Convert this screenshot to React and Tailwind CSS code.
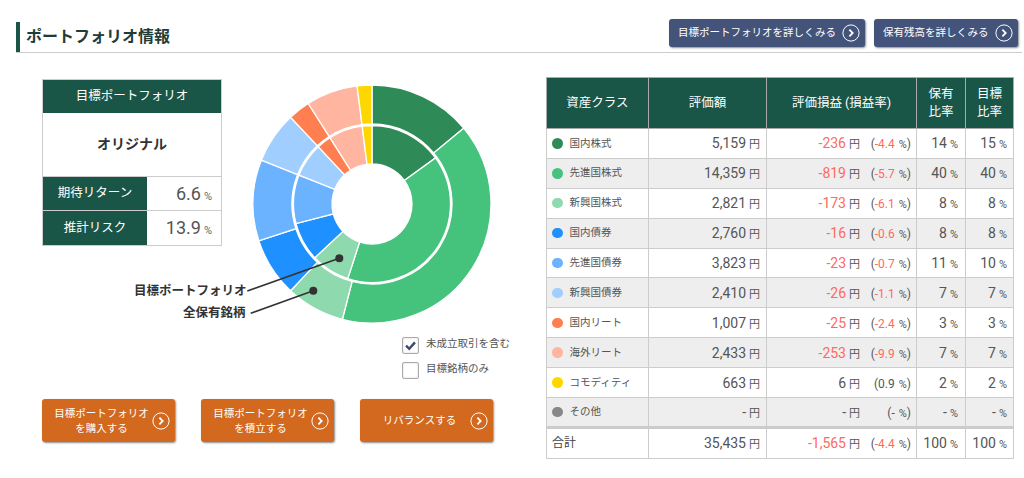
const FONT = 'font-["Roboto","Noto_Sans_CJK_JP",sans-serif]';

const COLORS = ["#2e8b57", "#45c27c", "#8fd9ae", "#1e90ff", "#6bb3ff", "#a0cfff", "#ff7f50", "#ffb59f", "#ffd700"];
const OUTER = [14, 40, 8, 8, 11, 7, 3, 7, 2];
const INNER = [15, 40, 8, 8, 10, 7, 3, 7, 2];

function arc(r0, r1, a0, a1) {
  const p = (r, a) => {
    const t = (a * Math.PI) / 180;
    return `${(120 + r * Math.sin(t)).toFixed(2)} ${(120 - r * Math.cos(t)).toFixed(2)}`;
  };
  const large = a1 - a0 > 180 ? 1 : 0;
  return `M${p(r1, a0)}A${r1} ${r1} 0 ${large} 1 ${p(r1, a1)}L${p(r0, a1)}A${r0} ${r0} 0 ${large} 0 ${p(r0, a0)}Z`;
}

function Ring({ data, r0, r1 }) {
  let acc = 0;
  return data.map((v, i) => {
    const a0 = acc * 3.6;
    acc += v;
    return <path key={i} d={arc(r0, r1, a0, acc * 3.6)} fill={COLORS[i]} stroke="#fff" strokeWidth="1.3" />;
  });
}

function Chevron({ className }) {
  return (
    <svg viewBox="0 0 20 20" className={className} fill="none" stroke="#fff">
      <circle cx="10" cy="10" r="9" strokeWidth="1.1" />
      <path d="M8.2 6.2 11.9 10 8.2 13.8" strokeWidth="2" />
    </svg>
  );
}

function TopButton({ children, className }) {
  return (
    <button className={`flex h-7 items-center justify-between rounded-[3px] bg-[#43537a] pl-[9px] pr-[5px] text-[10.5px] text-white shadow-[1px_1px_2px_rgba(0,0,0,0.45)] ${className}`}>
      <span className="whitespace-nowrap">{children}</span>
      <Chevron className="h-[18px] w-[18px] shrink-0" />
    </button>
  );
}

function OrangeButton({ lines }) {
  return (
    <button className="flex h-[43px] w-[133px] items-center justify-between rounded-[3px] bg-[#d2691e] pl-[9px] pr-[5px] text-[10.5px] leading-[15px] text-white shadow-[1px_1px_2px_rgba(0,0,0,0.45)]">
      <span className="flex-1 text-center">
        {lines.map((l) => (
          <span key={l} className="block whitespace-nowrap">{l}</span>
        ))}
      </span>
      <Chevron className="h-[18px] w-[18px] shrink-0" />
    </button>
  );
}

const ROWS = [
  ["#2e8b57", "国内株式", "5,159", "-236", "-4.4", "14", "15"],
  ["#45c27c", "先進国株式", "14,359", "-819", "-5.7", "40", "40"],
  ["#8fd9ae", "新興国株式", "2,821", "-173", "-6.1", "8", "8"],
  ["#1e90ff", "国内債券", "2,760", "-16", "-0.6", "8", "8"],
  ["#6bb3ff", "先進国債券", "3,823", "-23", "-0.7", "11", "10"],
  ["#a0cfff", "新興国債券", "2,410", "-26", "-1.1", "7", "7"],
  ["#ff7f50", "国内リート", "1,007", "-25", "-2.4", "3", "3"],
  ["#ffb59f", "海外リート", "2,433", "-253", "-9.9", "7", "7"],
  ["#ffd700", "コモディティ", "663", "6", "0.9", "2", "2"],
  ["#888888", "その他", "-", "-", "-", "-", "-"],
];

function Num({ v, unit, red }) {
  return (
    <>
      <span className={`text-[14px] ${red ? "text-[#ff6a5e]" : "text-[#555]"}`}>{v}</span>
      <span className="ml-[3px] text-[11px] text-[#555]">{unit}</span>
    </>
  );
}

function PL({ a, r }) {
  const red = a.startsWith("-") && a.length > 1;
  return (
    <td className="border border-[#ccc] pr-[5px]">
      <div className="flex items-baseline justify-end">
        <span><Num v={a} unit="円" red={red} /></span>
        <span className="w-[51px] text-right text-[12px] text-[#555]">
          (<span className={red ? "text-[#ff6a5e]" : ""}>{r}</span> <span className="ml-[1px] text-[11px]">%</span>)
        </span>
      </div>
    </td>
  );
}

function Ratio({ label, v }) {
  return (
    <div className="flex h-[34px] [&:not(:last-child)]:border-b [&:not(:last-child)]:border-[#ccc]">
      <div className="flex w-[104px] items-center justify-center bg-[#1a5648] text-[12.5px] text-white">{label}</div>
      <div className="flex-1 pr-[9px] pt-[3px] text-right">
        <span className="text-[18px] text-[#555]">{v}</span>
        <span className="ml-[3px] text-[11px] text-[#666]">%</span>
      </div>
    </div>
  );
}

export default function App() {
  return (
    <div className={`${FONT} h-[478px] w-[1024px] overflow-hidden bg-white text-[#444]`}>
      <header className="flex h-[52px] items-start justify-between pl-4 pr-[6px] pt-[19px]">
        <h1 className="mt-[3px] border-l-4 border-[#1a5648] pl-[6px] text-[16px] font-bold leading-[30px] text-[#1f3d36]">
          ポートフォリオ情報
        </h1>
        <div className="flex gap-[9px]">
          <TopButton className="w-[196px]">目標ポートフォリオを詳しくみる</TopButton>
          <TopButton className="w-[144px]">保有残高を詳しくみる</TopButton>
        </div>
      </header>
      <div className="ml-4 mr-[2px] h-px bg-[#ccc]" />

      <main className="flex pt-6">
        <section className="w-[546px] shrink-0">
          <div className="flex items-start pl-[42px]">
            <div className="mt-[2px] w-[180px] border border-[#ccc]">
              <div className="flex h-[33px] items-center justify-center bg-[#1a5648] text-[12.5px] text-white">目標ポートフォリオ</div>
              <div className="flex h-[64px] items-center justify-center border-b border-[#ccc] text-[14px] font-bold text-[#333]">オリジナル</div>
              <Ratio label="期待リターン" v="6.6" />
              <Ratio label="推計リスク" v="13.9" />
            </div>

            <div className="relative ml-[30px] mt-[7px] h-[240px] w-[240px]">
              <svg viewBox="0 0 240 240" className="h-[240px] w-[240px]">
                <Ring data={OUTER} r0={80} r1={119} />
                <Ring data={INNER} r0={40} r1={78.5} />
              </svg>
              <svg viewBox="0 0 240 240" className="absolute left-0 top-0 h-[240px] w-[240px] overflow-visible" fill="#333" stroke="#333">
                <path d="M-4.7 207 87.3 174.3" strokeWidth="1.6" />
                <circle cx="87.3" cy="174.3" r="4" stroke="none" />
                <path d="M-1.3 229.3 61.3 206.7" strokeWidth="1.6" />
                <circle cx="61.3" cy="206.7" r="4" stroke="none" />
              </svg>
              <span className="absolute left-[-118px] top-[198px] whitespace-nowrap text-[12.5px] font-bold text-[#333]">目標ポートフォリオ</span>
              <span className="absolute left-[-69px] top-[220px] whitespace-nowrap text-[12.5px] font-bold text-[#333]">全保有銘柄</span>
            </div>
          </div>

          <div className="ml-[402px] mt-[13px] flex flex-col gap-[8px] text-[10.5px] text-[#555]">
            <label className="flex h-[17px] items-center gap-[7px]">
              <span className="flex h-[17px] w-[17px] items-center justify-center rounded-[2px] border border-[#aaa] shadow-[inset_0_0_2px_rgba(0,0,0,0.2)]">
                <svg viewBox="0 0 14 14" className="h-[13px] w-[13px]"><path d="M2.2 7.2 5.6 10.6 11.8 3.6" fill="none" stroke="#3b4a6b" strokeWidth="2.6" /></svg>
              </span>
              <span className="-mt-1 whitespace-nowrap">未成立取引を含む</span>
            </label>
            <label className="flex h-[17px] items-center gap-[7px]">
              <span className="h-[17px] w-[17px] rounded-[2px] border border-[#aaa] shadow-[inset_0_0_2px_rgba(0,0,0,0.2)]" />
              <span className="-mt-1 whitespace-nowrap">目標銘柄のみ</span>
            </label>
          </div>

          <div className="ml-[42px] mt-[20px] flex gap-[26px]">
            <OrangeButton lines={["目標ポートフォリオ", "を購入する"]} />
            <OrangeButton lines={["目標ポートフォリオ", "を積立する"]} />
            <OrangeButton lines={["リバランスする"]} />
          </div>
        </section>

        <table className="w-[467px] table-fixed border-collapse">
          <colgroup>
            <col className="w-[102px]" />
            <col className="w-[118px]" />
            <col className="w-[150px]" />
            <col className="w-[49px]" />
            <col className="w-[48px]" />
          </colgroup>
          <thead>
            <tr className="h-[51px] bg-[#1a5648] text-center text-[12.5px] leading-[18px] text-white">
              <th className="border border-[#aaa] font-normal">資産クラス</th>
              <th className="border border-[#aaa] font-normal">評価額</th>
              <th className="border border-[#aaa] font-normal">評価損益 (損益率)</th>
              <th className="border border-[#aaa] font-normal">保有<br />比率</th>
              <th className="border border-[#aaa] font-normal">目標<br />比率</th>
            </tr>
          </thead>
          <tbody>
            {ROWS.map(([c, name, val, pl, rate, hold, target], i) => (
              <tr key={name} className={`h-[29.9px] ${i % 2 ? "bg-[#eee]" : "bg-white"}`}>
                <td className="border border-[#ccc] pl-[5px] text-[10.5px] text-[#555]">
                  <span className="flex items-center gap-[7px]">
                    <span className="h-[10.5px] w-[10.5px] rounded-full" style={{ backgroundColor: c }} />
                    {name}
                  </span>
                </td>
                <td className="border border-[#ccc] pr-[6px] text-right"><Num v={val} unit="円" /></td>
                <PL a={pl} r={rate} />
                <td className="border border-[#ccc] pr-[7px] text-right"><Num v={hold} unit="%" /></td>
                <td className="border border-[#ccc] pr-[6px] text-right"><Num v={target} unit="%" /></td>
              </tr>
            ))}
            <tr className="h-[31px] border-t-[3px] border-t-[#ccc] bg-white">
              <td className="border border-[#ccc] pl-[5px] text-[12px] text-[#444]">合計</td>
              <td className="border border-[#ccc] pr-[6px] text-right"><Num v="35,435" unit="円" /></td>
              <PL a="-1,565" r="-4.4" />
              <td className="border border-[#ccc] pr-[7px] text-right"><Num v="100" unit="%" /></td>
              <td className="border border-[#ccc] pr-[6px] text-right"><Num v="100" unit="%" /></td>
            </tr>
          </tbody>
        </table>
      </main>
    </div>
  );
}
